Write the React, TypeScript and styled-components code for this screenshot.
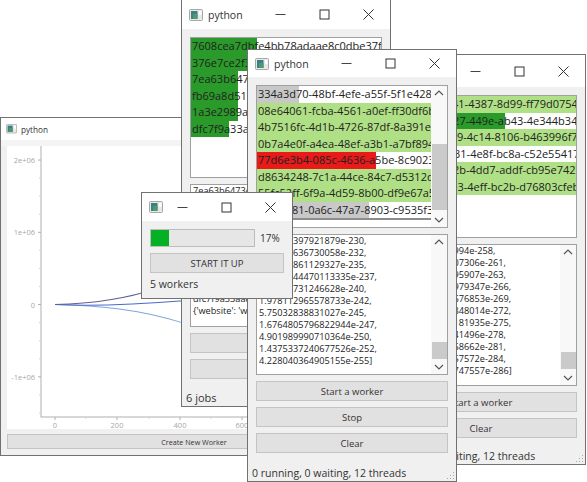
import React from 'react'
import styled, { createGlobalStyle } from 'styled-components'

const GlobalStyle = createGlobalStyle`
    html, body {
        margin: 0;
        padding: 0;
        background: #fff;
    }
    body {
        width: 587px;
        height: 482px;
        overflow: hidden;
        font-family: 'Open Sans', 'Noto Sans', sans-serif;
        color: #222;
    }
`

type Job = { id: string; tone?: 'done' | 'active' | 'failed' | 'waiting'; fill?: number }

const TONES = {
    done: '#2a9a2a',
    active: '#b0e085',
    failed: '#e81a1a',
    waiting: '#c8c8c8',
}

const JOBS_LEFT: Job[] = [
    { id: '7608cea7dbfe4bb78adaae8c0dbe37fc', tone: 'done', fill: 66 },
    { id: '376e7ce2f3d14c7ab2e09f7d51c8a6e4', tone: 'done', fill: 66 },
    { id: '7ea63b6473e14c7a9bb0f1d2a77c3e18', tone: 'done', fill: 47 },
    { id: 'fb69a8d5134e47a19dd2c77f8b6e0e21', tone: 'done', fill: 47 },
    { id: '1a3e2989a7c24f0ebb18d4e3a90c61f7', tone: 'done', fill: 47 },
    { id: 'dfc7f9a33aa84e12a7c6f3b01de95c7a', tone: 'done', fill: 38 },
]

const JOBS_FRONT: Job[] = [
    { id: '334a3d70-48bf-4efe-a55f-5f1e4289', tone: 'waiting', fill: 42 },
    { id: '08e64061-fcba-4561-a0ef-ff30df6b', tone: 'active', fill: 300 },
    { id: '4b7516fc-4d1b-4726-87df-8a391e58', tone: 'active', fill: 300 },
    { id: '0b7a4e0f-a4ea-48ef-a3b1-a7bf894c', tone: 'active', fill: 300 },
    { id: '77d6e3b4-085c-4636-a5be-8c9023e1', tone: 'failed', fill: 119 },
    { id: 'd8634248-7c1a-44ce-84c7-d5312d9f', tone: 'active', fill: 300 },
    { id: '55fc52ff-6f9a-4d59-8b00-df9e67a5', tone: 'active', fill: 300 },
    { id: 'c2e94f81-0a6c-47a7-8903-c9535f3a', tone: 'waiting', fill: 112 },
]

const JOBS_RIGHT: Job[] = [
    { id: 'e3c07a91-0e41-4387-8d99-ff79d07542', tone: 'active', fill: 300 },
    { id: 'a90d44b7-5c27-449e-ab43-4e344b34a6', tone: 'done', fill: 119 },
    { id: '6fd21c39-81b9-4c14-8106-b463996f70', tone: 'active', fill: 300 },
    { id: '18ab6e01-7d31-4e8f-bc8a-c52e55417f' },
    { id: 'c75d0e2b-a62b-4dd7-addf-cb95e74271', tone: 'active', fill: 300 },
    { id: '92f1b863-39e3-4eff-bc2b-d76803cfeb', tone: 'active', fill: 300 },
]

const RESULTS_LEFT = [
    '7ea63b6473e14c7a9bb0',
    '2.0418275520994e-190,',
    '6.5820614417306e-193,',
    '1.9103658495907e-195,',
    '5.8186077379347e-198,',
    '1.7029516276853e-200,',
    '4.9850239948014e-203,',
    '1.4635704181935e-205,',
    '4.3081206741496e-208,',
    'dfc7f9a33aa84e12a7c6',
    "{'website': 'www.example.com'}",
]

const NUMBERS_FRONT = [
    '2.44397397921879e-230,',
    '7.17793636730058e-232,',
    '2.10388861129327e-235,',
    '6.7306344470113335e-237,',
    '2.29469731246628e-240,',
    '1.978112965578733e-242,',
    '5.75032838831027e-245,',
    '1.6764805796822944e-247,',
    '4.901989990710364e-250,',
    '1.4375337240677526e-252,',
    '4.228040364905155e-255]',
]

const NUMBERS_RIGHT = [
    '1.04182755910994e-258,',
    '3.5820614417307306e-261,',
    '1.2103658459595907e-263,',
    '4.11860773797979347e-266,',
    '1.40295162767676853e-269,',
    '4.78502399484848014e-272,',
    '1.63357041898181935e-275,',
    '5.5812067414141496e-278,',
    '1.9083143785868662e-281,',
    '6.5290133756757572e-284,',
    '2.23520901474747557e-286]',
]

const Window = styled.div<{ $x: number; $y: number; $w: number; $h: number; $z: number }>`
    position: absolute;
    left: ${(p) => p.$x}px;
    top: ${(p) => p.$y}px;
    width: ${(p) => p.$w}px;
    height: ${(p) => p.$h}px;
    z-index: ${(p) => p.$z};
    box-sizing: border-box;
    border: 1px solid #717171;
    background: #f0f0f0;
    display: flex;
    flex-direction: column;
    overflow: hidden;
`

const TitleBar = styled.div<{ $h?: number; $small?: boolean }>`
    height: ${(p) => p.$h ?? 27}px;
    flex: none;
    background: #fff;
    display: flex;
    align-items: center;
    padding-left: ${(p) => (p.$small ? 5 : 7)}px;
    gap: ${(p) => (p.$small ? 4 : 5)}px;
    font-size: ${(p) => (p.$small ? 8.2 : 10.5)}px;
    color: #333;
`

const TitleText = styled.span`
    flex: 1;
`

const IconSvg = styled.svg`
    flex: none;
`

const Caption = styled.div<{ $pull?: number }>`
    flex: none;
    display: flex;
    align-items: center;
    margin-left: ${(p) => -(p.$pull ?? 0)}px;
`

const CaptionButton = styled.div`
    width: 44px;
    height: 27px;
    display: flex;
    align-items: center;
    justify-content: center;
`

const Body = styled.div`
    flex: 1;
    min-height: 0;
    display: flex;
    flex-direction: column;
    gap: 6px;
    padding: 8px 8px 0;
`

const Box = styled.div<{ $h: number }>`
    height: ${(p) => p.$h}px;
    flex: none;
    box-sizing: border-box;
    border: 1px solid #a0a0a0;
    background: #fff;
    display: flex;
    overflow: hidden;
`

const BoxContent = styled.div`
    flex: 1;
    min-width: 0;
    overflow: hidden;
`

const JobRow = styled.div<{ $tone?: Job['tone']; $fill?: number }>`
    height: 16.5px;
    line-height: 16.5px;
    font-size: 11px;
    padding-left: 1px;
    white-space: nowrap;
    overflow: hidden;
    background: ${(p) =>
        p.$tone
            ? `linear-gradient(to right, ${TONES[p.$tone]} ${p.$fill}px, transparent ${p.$fill}px)`
            : 'none'};
`

const RowEdge = styled.div`
    height: 2px;
    background: #8c8c8c;
`

const NumberLine = styled.div`
    font-size: 9.2px;
    line-height: 12px;
    white-space: nowrap;
    padding-left: 2px;
`

const Scrollbar = styled.div<{ $top: number; $thumb: number }>`
    width: 16px;
    flex: none;
    background: #f8f8f8;
    position: relative;
    &::after {
        content: '';
        position: absolute;
        left: 1px;
        right: 0;
        top: ${(p) => p.$top}px;
        height: ${(p) => p.$thumb}px;
        background: #cacaca;
    }
`

const ScrollArrow = styled.svg<{ $bottom?: boolean }>`
    position: absolute;
    left: 3px;
    ${(p) => (p.$bottom ? 'bottom: 4px;' : 'top: 4px;')}
    width: 10px;
    height: 6px;
`

const PushButton = styled.button<{ $h?: number; $size?: number }>`
    height: ${(p) => p.$h ?? 20}px;
    flex: none;
    box-sizing: border-box;
    border: 1px solid #c4c4c4;
    border-radius: 0;
    background: #e1e1e1;
    font-family: inherit;
    font-size: ${(p) => p.$size ?? 9.5}px;
    color: #333;
    padding: 0;
`

const Status = styled.div<{ $size?: number }>`
    font-size: ${(p) => p.$size ?? 10.5}px;
    color: #333;
    margin: auto 0 0 -4px;
    padding-bottom: 1px;
    line-height: 14px;
    white-space: nowrap;
`

const Grip = styled.svg`
    position: absolute;
    right: 1px;
    bottom: 1px;
    width: 9px;
    height: 9px;
`

const ProgressRow = styled.div`
    display: flex;
    align-items: center;
    gap: 5px;
    font-size: 10px;
    color: #333;
`

const Progress = styled.div`
    width: 105px;
    height: 18px;
    box-sizing: border-box;
    border: 1px solid #bcbcbc;
    background: #e6e6e6;
    display: flex;
`

const ProgressFill = styled.div<{ $pct: number }>`
    width: ${(p) => p.$pct}%;
    background: #06b025;
`

const WorkerCount = styled.div`
    font-size: 10.5px;
    line-height: 14px;
    color: #333;
    margin-top: -2px;
`

const PlotBody = styled.div`
    flex: 1;
    min-height: 0;
    display: flex;
    flex-direction: column;
    gap: 5px;
    padding: 0 6px 6px;
    border-top: 6px solid #f4f4f4;
`

const PlotArea = styled.svg`
    flex: 1;
    min-height: 0;
    width: 100%;
    background: #fff;
    display: block;
`

const TickLabel = styled.text`
    font-size: 7.5px;
    fill: #a8a8a8;
    font-family: 'Open Sans', sans-serif;
`

const AppIcon = ({ width = 14 }: { width?: number }) => (
    <IconSvg width={width} height={(width * 12) / 14} viewBox="0 0 14 12">
        <rect x="0.5" y="0.5" width="13" height="11" rx="1" fill="#e8e8e8" stroke="#a8a8a8" />
        <rect x="2" y="2" width="6.5" height="8" fill="#3d7f86" />
        <rect x="4" y="5" width="4.5" height="5" fill="#4d9a6a" />
        <rect x="10" y="2" width="2.5" height="4" fill="#fff" />
    </IconSvg>
)

const WindowButtons = ({ pull }: { pull?: number }) => (
    <Caption $pull={pull}>
        <CaptionButton>
            <svg width="11" height="11" viewBox="0 0 11 11">
                <path d="M0.5 5.5H10.5" stroke="#444" fill="none" />
            </svg>
        </CaptionButton>
        <CaptionButton>
            <svg width="11" height="11" viewBox="0 0 11 11">
                <rect x="1" y="1" width="9" height="9" stroke="#333" fill="none" />
            </svg>
        </CaptionButton>
        <CaptionButton>
            <svg width="11" height="11" viewBox="0 0 11 11">
                <path d="M0.5 0.5L10.5 10.5M10.5 0.5L0.5 10.5" stroke="#333" fill="none" />
            </svg>
        </CaptionButton>
    </Caption>
)

const ScrollBarWithArrows = ({ top, thumb }: { top: number; thumb: number }) => (
    <Scrollbar $top={top} $thumb={thumb}>
        <ScrollArrow viewBox="0 0 10 6">
            <path d="M1 5L5 1L9 5" stroke="#555" strokeWidth="1.2" fill="none" />
        </ScrollArrow>
        <ScrollArrow $bottom viewBox="0 0 10 6">
            <path d="M1 1L5 5L9 1" stroke="#555" strokeWidth="1.2" fill="none" />
        </ScrollArrow>
    </Scrollbar>
)

const ResizeGrip = () => (
    <Grip viewBox="0 0 9 9">
        <path d="M7 1h1v1H7zM7 4h1v1H7zM4 4h1v1H4zM7 7h1v1H7zM4 7h1v1H4zM1 7h1v1H1z" fill="#a8a8a8" />
    </Grip>
)

const Jobs = ({ jobs }: { jobs: Job[] }) => (
    <>
        {jobs.map((job) => (
            <JobRow key={job.id} $tone={job.tone} $fill={job.fill}>
                {job.id}
            </JobRow>
        ))}
    </>
)

const Numbers = ({ lines }: { lines: string[] }) => (
    <>
        {lines.map((line) => (
            <NumberLine key={line}>{line}</NumberLine>
        ))}
    </>
)

const Y_TICKS = [
    { y: 14, label: '2e+06' },
    { y: 86, label: '1e+06' },
    { y: 158, label: '0' },
    { y: 230, label: '-1e+06' },
]

const X_TICKS = [
    { x: 48, label: '0' },
    { x: 110, label: '200' },
    { x: 173, label: '400' },
    { x: 235, label: '600' },
]

const MINOR_Y = [32, 50, 68, 104, 122, 140, 176, 194, 212, 248, 266]
const MINOR_X = [79, 142, 204, 266]

const Plot = () => (
    <PlotArea viewBox="0 0 374 282" preserveAspectRatio="none">
        <path d="M34 0V270H374" stroke="#b0b0b0" fill="none" />
        {MINOR_Y.map((y) => (
            <path key={y} d={`M32 ${y}H34`} stroke="#d4d4d4" />
        ))}
        {MINOR_X.map((x) => (
            <path key={x} d={`M${x} 270V272`} stroke="#d4d4d4" />
        ))}
        {Y_TICKS.map((t) => (
            <g key={t.label}>
                <path d={`M31 ${t.y}H34`} stroke="#b0b0b0" />
                <TickLabel x="28" y={t.y + 3} textAnchor="end">
                    {t.label}
                </TickLabel>
            </g>
        ))}
        {X_TICKS.map((t) => (
            <g key={t.label}>
                <path d={`M${t.x} 270V273`} stroke="#b0b0b0" />
                <TickLabel x={t.x} y="281" textAnchor="middle">
                    {t.label}
                </TickLabel>
            </g>
        ))}
        <path d="M48 158C90 159 130 162 175 176" stroke="#7ca8d8" fill="none" />
        <path d="M48 158C90 160 130 158 180 154" stroke="#4a6ac8" fill="none" />
        <path d="M48 158C90 157 120 152 150 142" stroke="#5f5f98" fill="none" />
    </PlotArea>
)

export default function App() {
    return (
        <>
            <GlobalStyle />

            <Window $x={0} $y={117} $w={388} $h={339} $z={1}>
                <TitleBar $h={22} $small>
                    <AppIcon width={11} />
                    <TitleText>python</TitleText>
                </TitleBar>
                <PlotBody>
                    <Plot />
                    <PushButton $h={15} $size={7.2}>
                        Create New Worker
                    </PushButton>
                </PlotBody>
            </Window>

            <Window $x={181} $y={-1} $w={210} $h={408} $z={2}>
                <TitleBar $h={29}>
                    <AppIcon />
                    <TitleText>python</TitleText>
                    <WindowButtons />
                </TitleBar>
                <Body>
                    <Box $h={141}>
                        <BoxContent>
                            <Jobs jobs={JOBS_LEFT} />
                        </BoxContent>
                    </Box>
                    <Box $h={143}>
                        <BoxContent>
                            <Numbers lines={RESULTS_LEFT} />
                        </BoxContent>
                    </Box>
                    <PushButton />
                    <PushButton />
                    <Status $size={11}>6 jobs</Status>
                </Body>
            </Window>

            <Window $x={376} $y={54} $w={210} $h={411} $z={1}>
                <TitleBar $h={32}>
                    <AppIcon />
                    <TitleText>python</TitleText>
                    <WindowButtons />
                </TitleBar>
                <Body>
                    <Box $h={143}>
                        <BoxContent>
                            <Jobs jobs={JOBS_RIGHT} />
                        </BoxContent>
                    </Box>
                    <Box $h={142}>
                        <BoxContent>
                            <Numbers lines={NUMBERS_RIGHT} />
                        </BoxContent>
                        <ScrollBarWithArrows top={107} thumb={17} />
                    </Box>
                    <PushButton>Start a worker</PushButton>
                    <PushButton>Clear</PushButton>
                    <Status>0 running, 0 waiting, 12 threads</Status>
                </Body>
                <ResizeGrip />
            </Window>

            <Window $x={247} $y={49} $w={210} $h={433} $z={3}>
                <TitleBar>
                    <AppIcon />
                    <TitleText>python</TitleText>
                    <WindowButtons />
                </TitleBar>
                <Body>
                    <Box $h={143}>
                        <BoxContent>
                            <Jobs jobs={JOBS_FRONT} />
                            <RowEdge />
                        </BoxContent>
                        <ScrollBarWithArrows top={58} thumb={66} />
                    </Box>
                    <Box $h={141}>
                        <BoxContent>
                            <Numbers lines={NUMBERS_FRONT} />
                        </BoxContent>
                        <ScrollBarWithArrows top={107} thumb={17} />
                    </Box>
                    <PushButton>Start a worker</PushButton>
                    <PushButton>Stop</PushButton>
                    <PushButton>Clear</PushButton>
                    <Status>0 running, 0 waiting, 12 threads</Status>
                </Body>
                <ResizeGrip />
            </Window>

            <Window $x={141} $y={192} $w={152} $h={107} $z={4}>
                <TitleBar $h={28}>
                    <AppIcon />
                    <WindowButtons pull={8} />
                </TitleBar>
                <Body>
                    <ProgressRow>
                        <Progress>
                            <ProgressFill $pct={17} />
                        </Progress>
                        17%
                    </ProgressRow>
                    <PushButton>START IT UP</PushButton>
                    <WorkerCount>5 workers</WorkerCount>
                </Body>
            </Window>
        </>
    )
}
